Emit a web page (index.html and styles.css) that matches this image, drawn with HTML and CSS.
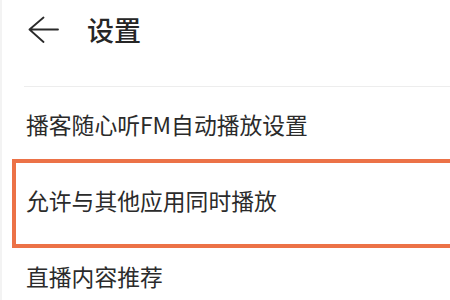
FILE: index.html
```html
<!DOCTYPE html>
<html lang="zh-CN">
<head>
<meta charset="utf-8">
<title>设置</title>
<link rel="stylesheet" href="styles.css">
</head>
<body>
<div class="page">
  <header class="header">
    <svg class="back" width="32" height="28" viewBox="0 0 32 28" aria-hidden="true">
      <path d="M31 14.5H2.5M16.5 2.5L2.5 14.5L16.5 27" fill="none" stroke="#2a2a2a" stroke-width="1.8" stroke-linecap="round" stroke-linejoin="round"/>
    </svg>
    <h1 class="title">设置</h1>
  </header>
  <div class="divider"></div>
  <ul class="list">
    <li class="row">播客随心听FM自动播放设置</li>
    <li class="row">允许与其他应用同时播放</li>
    <li class="row">直播内容推荐</li>
  </ul>
  <div class="highlight"></div>
</div>
</body>
</html>
```

FILE: styles.css
```css
html, body {
  margin: 0;
  padding: 0;
  background: #ffffff;
}
body {
  width: 450px;
  height: 300px;
  overflow: hidden;
  font-family: "Noto Sans CJK SC", "Noto Sans", sans-serif;
  color: #2b2b2b;
}
.page {
  position: relative;
  height: 300px;
  border-left: 2px solid #f3f3f3;
  box-sizing: border-box;
}
.header {
  display: flex;
  align-items: center;
  height: 58px;
  padding-left: 25px;
}
.back {
  display: block;
  flex: none;
}
.title {
  margin: 0 0 0 28px;
  font-size: 27px;
  font-weight: 500;
  line-height: 1;
  color: #262626;
}
.divider {
  margin: 28px 0 0 22px;
  height: 1px;
  background: #ededed;
}
.list {
  list-style: none;
  margin: 0;
  padding: 0;
}
.row {
  display: flex;
  align-items: center;
  height: 76px;
  padding-left: 24px;
  font-size: 22.8px;
  line-height: 1;
  color: #2b2b2b;
  white-space: nowrap;
}
.highlight {
  position: absolute;
  left: 10px;
  top: 159px;
  width: 460px;
  height: 89px;
  box-sizing: border-box;
  border: 4px solid #ec7247;
  pointer-events: none;
}
```
